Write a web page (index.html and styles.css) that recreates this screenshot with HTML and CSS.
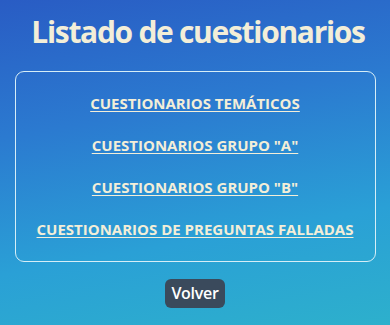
FILE: index.html
```html
<!DOCTYPE html>
<html lang="es">
<head>
<meta charset="utf-8">
<title>Listado de cuestionarios</title>
<link rel="stylesheet" href="styles.css">
</head>
<body>
<main class="page">
  <h1 class="title">Listado de cuestionarios</h1>
  <nav class="card">
    <a class="link" href="#">CUESTIONARIOS TEMÁTICOS</a>
    <a class="link" href="#">CUESTIONARIOS GRUPO "A"</a>
    <a class="link" href="#">CUESTIONARIOS GRUPO "B"</a>
    <a class="link" href="#">CUESTIONARIOS DE PREGUNTAS FALLADAS</a>
  </nav>
  <button class="back" type="button">Volver</button>
</main>
</body>
</html>
```
FILE: styles.css
```css
html, body {
  margin: 0;
  padding: 0;
  height: 100%;
}
body {
  background: linear-gradient(170deg, #295cc4 0%, #2b7ad0 35%, #2aa0d6 70%, #2db0cc 100%);
  font-family: "Open Sans", "Liberation Sans", sans-serif;
  color: #f3eed8;
}
.page {
  display: flex;
  flex-direction: column;
  align-items: center;
  padding-top: 10px;
}
.title {
  margin: 0 0 0 6px;
  font-size: 30px;
  font-weight: 700;
  line-height: 44px;
  letter-spacing: -1.3px;
}
.card {
  box-sizing: border-box;
  width: 361px;
  height: 191px;
  margin-top: 17px;
  border: 1.5px solid #d6eef7;
  border-radius: 9px;
  display: flex;
  flex-direction: column;
  align-items: center;
  padding-top: 21px;
  gap: 22px;
}
.link {
  color: #f3eed8;
  font-size: 15px;
  font-weight: 700;
  line-height: 20px;
  letter-spacing: 0;
  text-decoration: underline;
  text-underline-offset: 2px;
}
.back {
  margin-top: 17px;
  background: #3a4a5c;
  color: #ffffff;
  border: none;
  border-radius: 6px;
  font-family: "Open Sans", "Liberation Sans", sans-serif;
  font-size: 16px;
  font-weight: 600;
  padding: 4px 6px;
  line-height: 21px;
  letter-spacing: -0.3px;
}
```
